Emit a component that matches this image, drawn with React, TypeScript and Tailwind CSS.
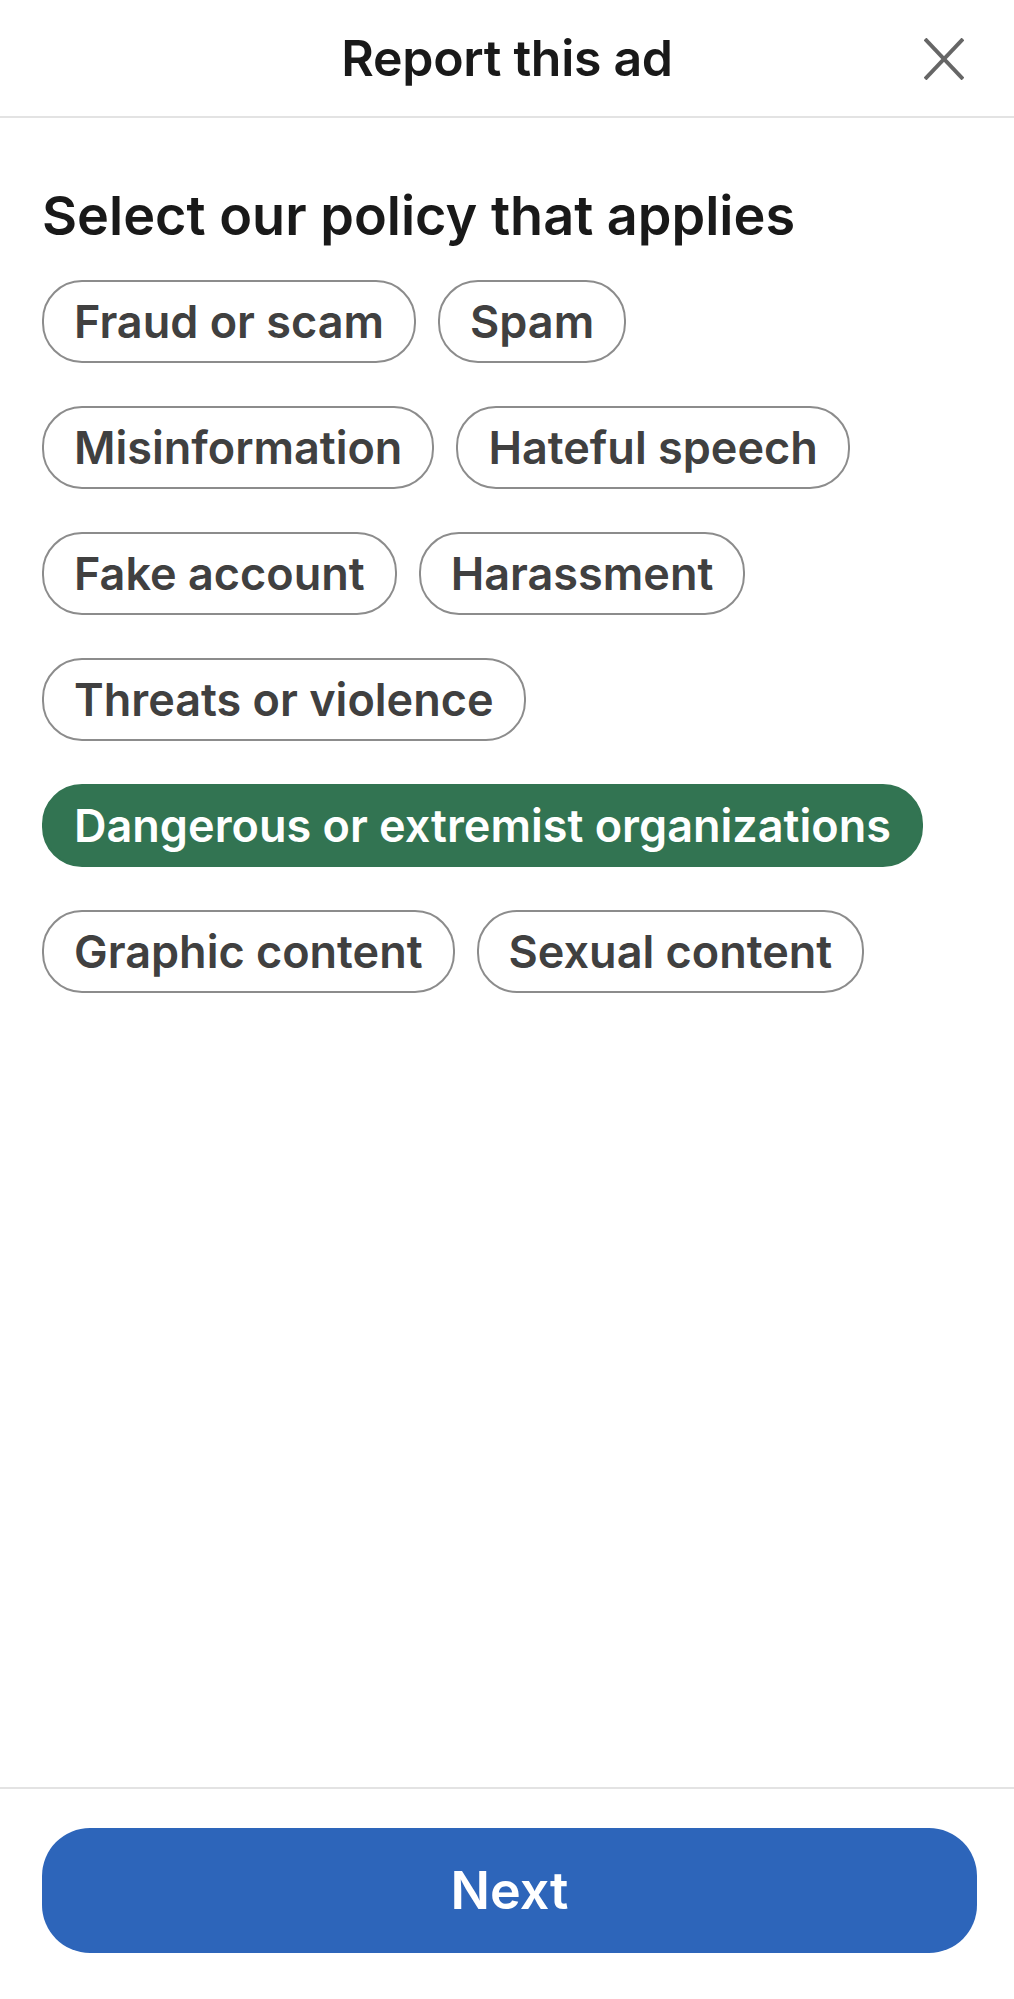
import React from "react";

const rows: string[][] = [
  ["Fraud or scam", "Spam"],
  ["Misinformation", "Hateful speech"],
  ["Fake account", "Harassment"],
  ["Threats or violence"],
  ["Dangerous or extremist organizations"],
  ["Graphic content", "Sexual content"],
];

const selected = "Dangerous or extremist organizations";

export default function App() {
  return (
    <div
      className="flex h-[1999px] w-full flex-col bg-white"
      style={{ fontFamily: "Inter, 'Noto Sans', sans-serif" }}
    >
      <header className="relative flex h-[118px] shrink-0 items-center justify-center border-b-2 border-[#e3e3e3]">
        <h1 className="text-[50px] font-semibold tracking-[-0.3px] text-[#191919]">Report this ad</h1>
        <button className="absolute right-[50px] top-[38px] h-[42px] w-[40px]" aria-label="Close">
          <svg viewBox="0 0 40 42" className="h-full w-full" fill="none" stroke="#666666" strokeWidth="4" strokeLinecap="butt">
            <line x1="1" y1="1" x2="39" y2="41" />
            <line x1="39" y1="1" x2="1" y2="41" />
          </svg>
        </button>
      </header>

      <main className="flex-1 px-[42px] pt-[62px]">
        <h2 className="text-[54px] font-semibold leading-[72px] text-[#191919]">
          Select our policy that applies
        </h2>
        <div className="mt-[28px] flex flex-col gap-[43px]">
          {rows.map((row, i) => (
            <div key={i} className="flex gap-[22px]">
              {row.map((label) => {
                const isSel = label === selected;
                return (
                  <button
                    key={label}
                    className={
                      isSel
                        ? "flex h-[83px] items-center rounded-[40px] border-2 border-[#327452] bg-[#327452] px-[30px] text-[45px] font-semibold text-white"
                        : "flex h-[83px] items-center rounded-[40px] border-2 border-[#8c8c8c] bg-white px-[30px] text-[45px] font-semibold text-[#404040]"
                    }
                  >
                    {label}
                  </button>
                );
              })}
            </div>
          ))}
        </div>
      </main>

      <footer className="shrink-0 border-t-2 border-[#e3e3e3] pl-[42px] pr-[37px] pt-[39px] pb-[46px]">
        <button className="flex h-[125px] w-full items-center justify-center rounded-[48px] bg-[#2d65ba] text-[52px] font-semibold text-white">
          Next
        </button>
      </footer>
    </div>
  );
}
